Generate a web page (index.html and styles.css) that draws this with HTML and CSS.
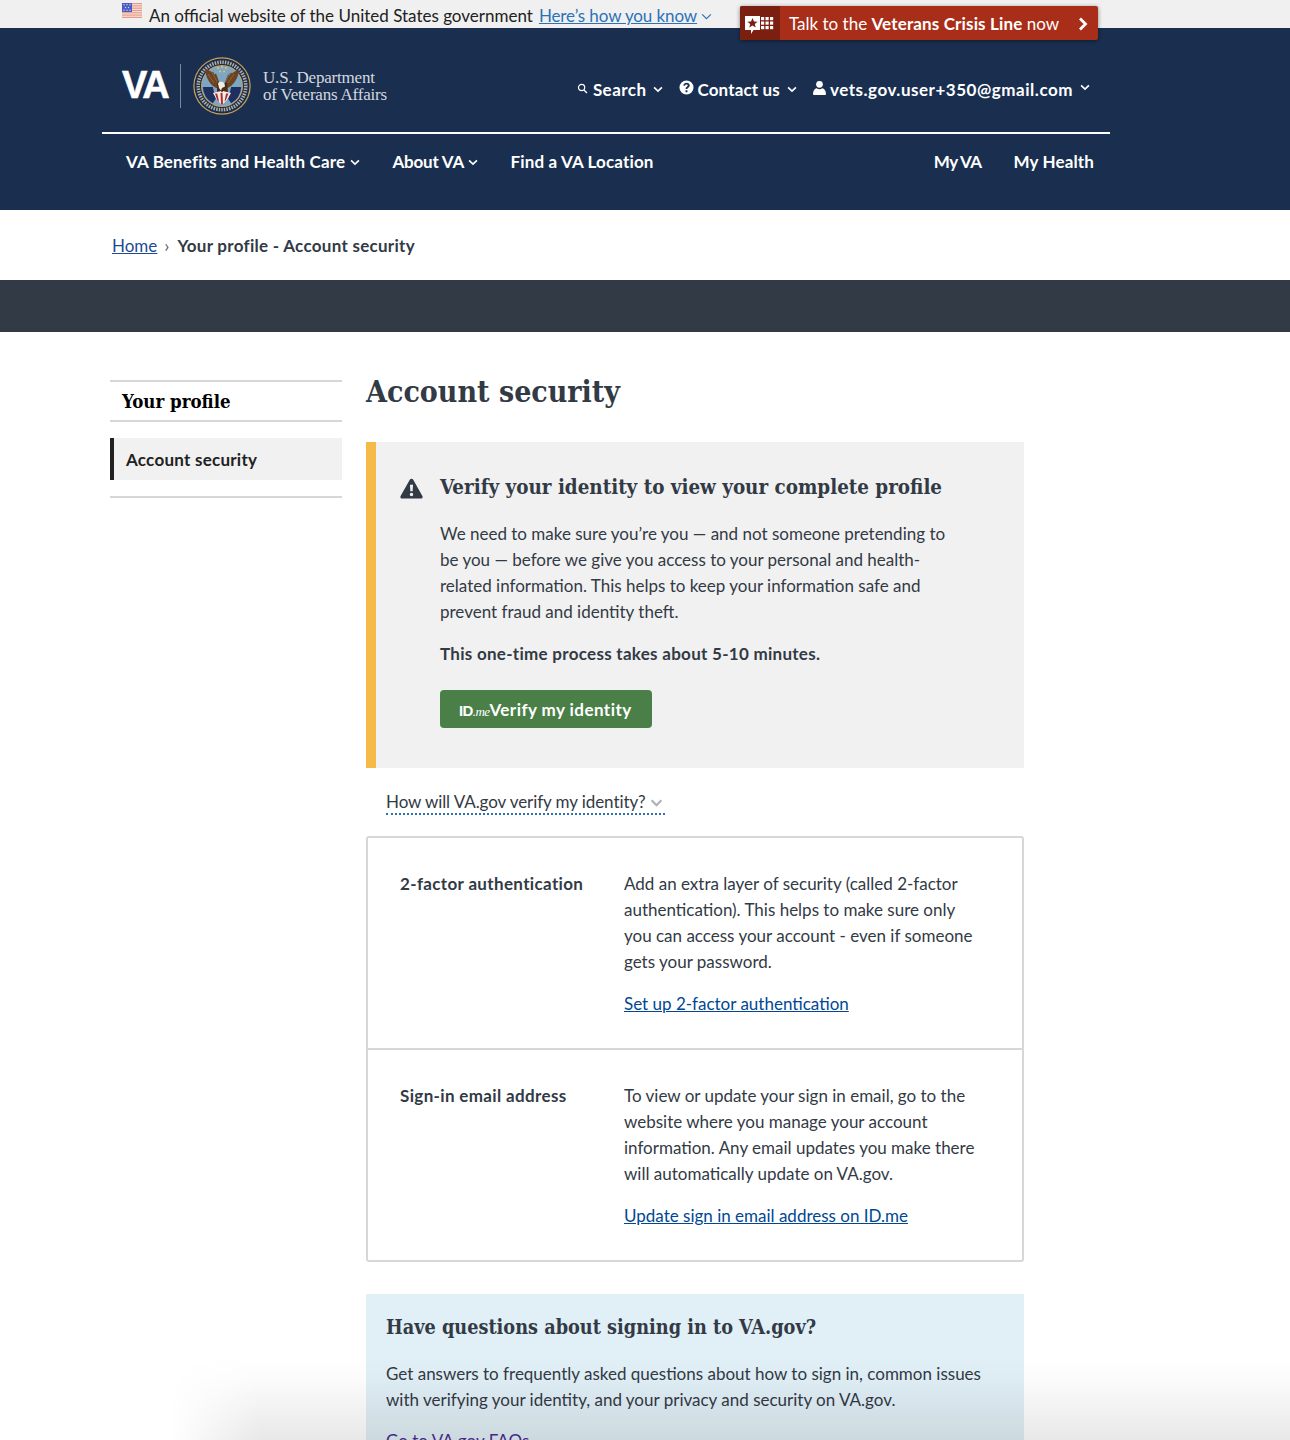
FILE: index.html
```html
<!DOCTYPE html>
<html lang="en">
<head>
<meta charset="utf-8">
<title>Account security | Veterans Affairs</title>
<link rel="stylesheet" href="styles.css">
</head>
<body>
<div class="page">
  <div class="gov-banner">
    <svg class="flag" viewBox="0 0 20 15" width="20" height="15" aria-hidden="true">
      <rect width="20" height="15" fill="#f6e2da"/>
      <g fill="#e59a86"><rect y="0" width="20" height="1.15"/><rect y="2.3" width="20" height="1.15"/><rect y="4.6" width="20" height="1.15"/><rect y="6.9" width="20" height="1.15"/><rect y="9.2" width="20" height="1.15"/><rect y="11.5" width="20" height="1.15"/><rect y="13.8" width="20" height="1.2"/></g>
      <rect width="10" height="9" fill="#4a5cc4"/>
      <g fill="#cfd5f5"><circle cx="2" cy="1.8" r=".7"/><circle cx="5" cy="1.8" r=".7"/><circle cx="8" cy="1.8" r=".7"/><circle cx="3.500" cy="4.500" r=".7"/><circle cx="6.500" cy="4.500" r=".7"/><circle cx="2" cy="7.200" r=".7"/><circle cx="5" cy="7.200" r=".7"/><circle cx="8" cy="7.200" r=".7"/></g>
    </svg>
    <span class="gov-text">An official website of the United States government</span>
    <a class="gov-link" href="#">Here’s how you know</a>
    <svg class="gov-chev" viewBox="0 0 12 8" width="11" height="7" aria-hidden="true"><path d="M1 1.500l5 5 5-5" fill="none" stroke="#2b72b9" stroke-width="1.300"/></svg>
  </div>

  <a class="crisis" href="#">
    <span class="crisis-icon">
      <svg viewBox="0 0 30 24" width="30" height="24" aria-hidden="true">
        <path d="M0 3h15v14H8.500L6 21v-4H0z" fill="#fff"/>
        <path d="M7.500 5l1.500 3.400 3.600.3-2.800 2.300.9 3.500-3.200-1.900-3.200 1.900.9-3.500L2.400 8.700 6 8.400z" fill="#7b2010"/>
        <g fill="#fff"><rect x="16" y="4" width="3.200" height="3.200"/><rect x="20.500" y="4" width="3.200" height="3.200"/><rect x="25" y="4" width="3.200" height="3.200"/><rect x="16" y="8.500" width="3.200" height="3.200"/><rect x="20.500" y="8.500" width="3.200" height="3.200"/><rect x="25" y="8.500" width="3.200" height="3.200"/><rect x="16" y="13" width="3.200" height="3.200"/><rect x="20.500" y="13" width="3.200" height="3.200"/><rect x="25" y="13" width="3.200" height="3.200"/></g>
      </svg>
    </span>
    <span class="crisis-text">Talk to the <b>Veterans Crisis Line</b> now</span>
    <svg class="crisis-chev" viewBox="0 0 10 14" width="10" height="14" aria-hidden="true"><path d="M2 1.500l5.500 5.500L2 12.500" fill="none" stroke="#fff" stroke-width="2.800"/></svg>
  </a>

  <header class="site-header">
    <div class="header-inner">
      <div class="top-row">
        <div class="logo">
          <span class="logo-va">VA</span>
          <span class="logo-rule"></span>
          <svg class="seal" viewBox="0 0 58 58" width="58" height="58" aria-hidden="true">
            <circle cx="29" cy="29" r="28.700" fill="#c9a25a"/>
            <circle cx="29" cy="29" r="27.500" fill="#1b2c4c"/>
            <circle cx="29" cy="29" r="23.800" fill="none" stroke="#aeb0a6" stroke-width="3.600" stroke-dasharray="1.500 1.100"/>
            <circle cx="29" cy="29" r="21" fill="#c9a25a"/>
            <circle cx="29" cy="29" r="20" fill="#7ca6c2"/>
            <path d="M9.800 30h10l3 12-3 4.300A20 20 0 0 1 9.800 30z" fill="#1f2f62"/>
            <path d="M48.200 30h-10l-3 12 3 4.300A20 20 0 0 0 48.200 30z" fill="#1f2f62"/>
            <path d="M27 32C20 31 13 24 12 12c3 .8 6 2.200 7 3.500l1-1 1.500 3 1.500-1 3 8 2 5z" fill="#6b4223"/>
            <path d="M31 32c7-1 14-8 15-19-3 .8-6 2.200-7 3.500l-1-1-1.500 3-1.500-1-3 8-2 4z" fill="#6b4223"/>
            <path d="M15 17l6 9M19 15.500l5 9M41 17l-6 9M37 16l-4 8" stroke="#8f6236" stroke-width="1" fill="none"/>
            <path d="M24 26h10l1 9H24z" fill="#4a2c17"/>
            <path d="M25 26.500c1-2.500 5-2.500 6.500 0l.5 3-3 1.500-1 2.500-2-2.500z" fill="#f2ede2"/>
            <path d="M20 36l8-2 1 2 1-2 8 2-4 7-5 5-5-5z" fill="#f3efe7"/>
            <path d="M22 36.500h2.200l2 8.500-2-2zM27.500 36h2l.5 11-1 1-1-1zM33 36.500h2.500l-2.500 6.500-1.500 1.500z" fill="#b7282e"/>
            <g fill="#dcc46c"><circle cx="25" cy="11" r="1.100"/><circle cx="29" cy="10" r="1.100"/><circle cx="33" cy="11" r="1.100"/><circle cx="27" cy="14.500" r="1.100"/><circle cx="31" cy="14.500" r="1.100"/></g>
          </svg>
          <span class="logo-name">U.S. Department<br>of Veterans Affairs</span>
        </div>
        <nav class="util-nav">
          <a class="util-item" href="#">
            <svg class="ico-search" viewBox="0 0 12 12" width="11" height="11" aria-hidden="true"><circle cx="5" cy="5" r="3.400" fill="none" stroke="#fff" stroke-width="1.300"/><path d="M7.600 7.600l3.300 3.300" stroke="#fff" stroke-width="1.500"/></svg>
            <span>Search</span>
            <svg class="chev" viewBox="0 0 12 8" width="10" height="7" aria-hidden="true"><path d="M1.300 1.500L6 6l4.700-4.500" fill="none" stroke="#fff" stroke-width="2"/></svg>
          </a>
          <a class="util-item" href="#">
            <svg class="ico-help" viewBox="0 0 16 16" width="15" height="15" aria-hidden="true"><path fill-rule="evenodd" d="M8 .5a7.500 7.500 0 100 15 7.500 7.500 0 000-15zM7 11h2v2H7zm1-8c2 0 3.400 1.100 3.400 2.800 0 1.300-.8 2-1.600 2.500-.6.4-.8.6-.8 1.200H7c0-1.300.5-1.900 1.300-2.400.6-.4 1-.7 1-1.200 0-.6-.5-1-1.300-1-.8 0-1.400.5-1.500 1.200l-1.900-.3C4.900 4 6.200 3 8 3z" fill="#fff"/></svg>
            <span class="util-tight">Contact us</span>
            <svg class="chev" viewBox="0 0 12 8" width="10" height="7" aria-hidden="true"><path d="M1.300 1.500L6 6l4.700-4.500" fill="none" stroke="#fff" stroke-width="2"/></svg>
          </a>
          <a class="util-item" href="#">
            <svg class="ico-user" viewBox="0 0 14 16" width="13" height="16" aria-hidden="true"><circle cx="7" cy="4" r="3.600" fill="#fff"/><path d="M1 15.500c-.6 0-1-.4-1-1 0-3.600 2-6 4-6.300.9.800 1.900 1.100 3 1.100s2.100-.3 3-1.100c2 .3 4 2.700 4 6.300 0 .6-.4 1-1 1z" fill="#fff"/></svg>
            <span class="util-wide">vets.gov.user+350@gmail.com</span>
            <svg class="chev chev-up" viewBox="0 0 12 8" width="10" height="7" aria-hidden="true"><path d="M1.300 1.500L6 6l4.700-4.500" fill="none" stroke="#fff" stroke-width="2"/></svg>
          </a>
        </nav>
      </div>
      <nav class="main-nav">
        <a class="nav-item" href="#">VA Benefits and Health Care
          <svg class="chev" viewBox="0 0 12 8" width="10" height="7" aria-hidden="true"><path d="M1.300 1.500L6 6l4.700-4.500" fill="none" stroke="#fff" stroke-width="2"/></svg></a>
        <a class="nav-item nav-about" href="#">About VA
          <svg class="chev" viewBox="0 0 12 8" width="10" height="7" aria-hidden="true"><path d="M1.300 1.500L6 6l4.700-4.500" fill="none" stroke="#fff" stroke-width="2"/></svg></a>
        <a class="nav-item" href="#">Find a VA Location</a>
        <a class="nav-item nav-push" href="#">My VA</a>
        <a class="nav-item" href="#">My Health</a>
      </nav>
    </div>
  </header>

  <div class="breadcrumb">
    <a href="#">Home</a>
    <span class="crumb-sep">›</span>
    <strong>Your profile - Account security</strong>
  </div>
  <div class="dark-band"></div>

  <div class="content">
    <aside class="side">
      <h2 class="side-title">Your profile</h2>
      <div class="side-menu"><a class="side-link" href="#">Account security</a></div>
    </aside>
    <main class="main">
      <h1 class="page-title">Account security</h1>

      <section class="alert">
        <svg class="alert-icon" viewBox="0 0 24 22" width="23" height="21" aria-hidden="true"><path fill-rule="evenodd" d="M12 .8c.8 0 1.400.4 1.800 1.100l9.600 17c.7 1.300-.2 2.700-1.700 2.700H2.300C.8 21.600-.1 20.200.6 18.900l9.600-17C10.600 1.200 11.200.8 12 .8zM10.400 7l.4 7h2.400l.4-7zM12 15.400a1.800 1.800 0 100 3.600 1.800 1.800 0 000-3.600z" fill="#323a45"/></svg>
        <div class="alert-body">
          <h2 class="alert-title">Verify your identity to view your complete profile</h2>
          <p class="para alert-para">We need to make sure you’re you — and not someone pretending to be you — before we give you access to your personal and health-related information. This helps to keep your information safe and prevent fraud and identity theft.</p>
          <p class="para alert-strong"><strong>This one-time process takes about 5-10 minutes.</strong></p>
          <a class="verify-btn" href="#"><span class="idme">ID<i>.me</i></span>Verify my identity</a>
        </div>
      </section>

      <div class="how-wrap">
        <a class="how-link" href="#">How will VA.gov verify my identity?
          <svg viewBox="0 0 14 9" width="13" height="8" aria-hidden="true"><path d="M1.500 1.500L7 7l5.500-5.500" fill="none" stroke="#aeb0b5" stroke-width="2.400"/></svg></a>
      </div>

      <section class="card">
        <div class="card-row card-row-first">
          <div class="card-label">2-factor authentication</div>
          <div class="card-value">
            <p class="para">Add an extra layer of security (called 2-factor authentication). This helps to make sure only you can access your account - even if someone gets your password.</p>
            <a class="link" href="#">Set up 2-factor authentication</a>
          </div>
        </div>
        <div class="card-row">
          <div class="card-label">Sign-in email address</div>
          <div class="card-value">
            <p class="para">To view or update your sign in email, go to the website where you manage your account information. Any email updates you make there will automatically update on VA.gov.</p>
            <a class="link" href="#">Update sign in email address on ID.me</a>
          </div>
        </div>
      </section>

      <section class="help">
        <h2 class="help-title">Have questions about signing in to VA.gov?</h2>
        <p class="para">Get answers to frequently asked questions about how to sign in, common issues with verifying your identity, and your privacy and security on VA.gov.</p>
        <a class="link link-visited" href="#">Go to VA.gov FAQs</a>
      </section>
    </main>
  </div>
  <div class="bottom-fade"></div>
</div>
</body>
</html>
```

FILE: styles.css
```css
* { box-sizing: border-box; }
html, body { margin: 0; padding: 0; background: #fff; }
body {
  font-family: "Lato", "Noto Sans", sans-serif;
  font-size: 17px;
  color: #323a45;
}
.page { position: relative; height: 1440px; overflow: hidden; }
a { color: inherit; text-decoration: none; }
strong { letter-spacing: .28px; }
b { letter-spacing: .15px; }

.gov-banner {
  height: 28px; background: #f0f0f0;
  display: flex; align-items: center;
  padding: 2px 0 0 122px; font-size: 17px; color: #212121;
}
.flag { align-self: flex-start; margin-top: 1px; margin-right: 7px; }
.gov-text { margin-right: 6px; }
.gov-link { color: #2b72b9; text-decoration: underline; letter-spacing: -.1px; }
.gov-chev { margin-left: 4px; margin-top: 3px; }

.crisis {
  position: absolute; left: 740px; top: 6px; width: 358px; height: 34px;
  background: #a92e1a; border-radius: 2px;
  box-shadow: 0 1px 4px rgba(0,0,0,.45);
  display: flex; align-items: center; color: #fff; font-size: 17px;
}
.crisis-icon {
  width: 40px; height: 34px; background: #7b2010; border-radius: 2px 0 0 2px;
  display: flex; align-items: center; justify-content: center; flex: none;
  padding-top: 4px;
}
.crisis-text { margin-left: 9px; flex: 1; white-space: nowrap; }
.crisis-chev { margin-right: 10px; margin-top: 1px; }

.site-header { background: #1a2f50; height: 182px; color: #fff; }
.header-inner { margin-left: 102px; width: 1008px; }
.top-row {
  height: 106px; border-bottom: 2px solid #fff;
  display: flex; align-items: flex-start; justify-content: space-between;
}
.logo { display: flex; align-items: center; padding: 29px 0 0 20px; }
.logo-va {
  font-family: "Liberation Sans", sans-serif; font-weight: 700;
  font-size: 38px; letter-spacing: -2.4px; line-height: 56px; width: 58px; color: #fff;
  height: 58px; -webkit-text-stroke: .6px #fff;
}
.logo-rule { width: 1px; height: 44px; background: #7d8799; margin-right: 12px; }
.seal { flex: none; margin-right: 12px; }
.logo-name {
  font-family: "Liberation Serif", serif; font-size: 17px; line-height: 17px;
  color: #d4d8df; letter-spacing: -.2px;
}
.util-nav {
  display: flex; align-items: center; padding: 51px 20px 0 0; gap: 16px;
  font-weight: 700; font-size: 17px; letter-spacing: .45px;
}
.util-item { display: flex; align-items: center; white-space: nowrap; }
.util-tight { letter-spacing: .15px; }
.util-wide { letter-spacing: .52px; }
.ico-search { margin-right: 5px; margin-top: -3px; }
.ico-help { margin-right: 3px; margin-top: -4px; }
.ico-user { margin-right: 4px; margin-top: -4px; }
.chev { margin-left: 7px; }
.chev-up { margin-top: -4px; margin-left: 7px; }

.main-nav {
  display: flex; align-items: center; height: 54px; padding: 0 16px 0 24px; gap: 32px;
  font-weight: 700; font-size: 17px; letter-spacing: .15px;
}
.nav-item { white-space: nowrap; }
.nav-item .chev { margin-left: 1px; vertical-align: 2px; }
.nav-about { letter-spacing: -.2px; }
.nav-push { margin-left: auto; letter-spacing: -.6px; }

.breadcrumb {
  height: 70px; display: flex; align-items: center; padding-left: 112px; font-size: 17px;
}
.breadcrumb a { color: #1c4a96; text-decoration: underline; }
.crumb-sep { margin: 0 8px 0 7px; color: #5b616b; font-size: 18px; }
.dark-band { height: 52px; background: #323a45; }

.content { display: flex; padding: 48px 0 0 110px; gap: 24px; align-items: flex-start; }
.side { width: 232px; flex: none; }
.side-title {
  margin: 0; height: 42px; border-top: 2px solid #d6d7d9; border-bottom: 2px solid #d6d7d9;
  padding-left: 12px; font-family: "DejaVu Serif Condensed", "DejaVu Serif", serif; font-weight: 700;
  font-size: 18.5px; line-height: 39px; color: #000;
}
.side-menu { margin-top: 16px; padding-bottom: 16px; border-bottom: 2px solid #d6d7d9; }
.side-link {
  display: block; height: 42px; line-height: 44px; background: #f1f1f1;
  border-left: 4px solid #212121; padding-left: 12px; font-weight: 700; color: #212121;
  letter-spacing: .25px;
}

.main { width: 658px; flex: none; }
.page-title {
  margin: -5px 0 0; height: 67px; font-family: "DejaVu Serif Condensed", "DejaVu Serif", serif; font-weight: 700;
  font-size: 30px; line-height: 34px; color: #323a45;
}
.alert {
  height: 326px; background: #f1f1f1; border-left: 10px solid #f6bb46;
  display: flex; padding: 32px 0 0 24px;
}
.alert-icon { flex: none; margin: 4px 17px 0 0; }
.alert-body { width: 510px; }
.alert-title {
  margin: 0 0 21px; font-family: "DejaVu Serif Condensed", "DejaVu Serif", serif; font-size: 20.4px;
  line-height: 26px; font-weight: 700; color: #323a45; white-space: nowrap;
}
.para { margin: 0; line-height: 26px; }
.alert-strong { margin-top: 16px; }
.verify-btn {
  display: flex; align-items: center; margin-top: 23px; width: 212px; height: 38px;
  padding-left: 19px; background: #4a8048; border-radius: 4px; color: #fff;
  font-weight: 700; font-size: 17px; white-space: nowrap; letter-spacing: .45px;
}
.idme { font-size: 15px; font-family: "Liberation Sans", sans-serif; letter-spacing: -.6px; padding-top: 3px; }
.idme i { font-family: "Liberation Serif", serif; font-size: 13px; font-weight: 400; }

.how-wrap { padding: 22px 0 0 20px; height: 68px; }
.how-link {
  display: inline-block; line-height: 23px; border-bottom: 2px dotted #2b72b9; color: #323a45;
  letter-spacing: -.08px;
}
.how-link svg { vertical-align: 1px; margin-right: 2px; }

.card { border: 2px solid #d6d7d9; border-radius: 3px; height: 426px; }
.card-row { display: flex; height: 212px; padding: 33px 32px 0; }
.card-row-first { height: 210px; }
.card-row + .card-row { border-top: 2px solid #d6d7d9; }
.card-label { width: 224px; flex: none; font-weight: 700; line-height: 26px; letter-spacing: .35px; }
.card-value { width: 356px; flex: none; }
.card-value .para { margin-bottom: 16px; }
.link { color: #004795; text-decoration: underline; line-height: 26px; }
.link-visited { color: #4c2c92; display: block; margin-top: 15px; }

.help { margin-top: 32px; background: #e1eff6; padding: 21px 20px 20px; height: 220px; }
.help-title {
  margin: 0 0 20px; font-family: "DejaVu Serif Condensed", "DejaVu Serif", serif; font-size: 19.7px; line-height: 26px;
  font-weight: 700; color: #323a45; white-space: nowrap;
}

.bottom-fade {
  position: absolute; left: 170px; right: 0; bottom: 0; height: 84px; pointer-events: none;
  background: linear-gradient(to bottom, rgba(0,0,0,0), rgba(0,0,0,.01) 25%, rgba(0,0,0,.09));
  -webkit-mask-image: linear-gradient(to right, transparent, #000 90px);
  mask-image: linear-gradient(to right, transparent, #000 90px);
}
```
